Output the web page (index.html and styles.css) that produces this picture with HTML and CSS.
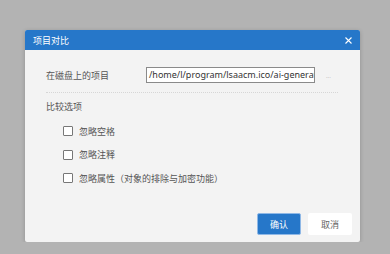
FILE: index.html
```html
<!DOCTYPE html>
<html lang="zh">
<head>
  <meta charset="UTF-8" />
  <title>项目对比</title>
  <link rel="stylesheet" href="styles.css">
</head>
<body>
  <div class="dialog">
    <div class="titlebar">
      <span class="title">项目对比</span>
      <svg class="close" width="9" height="9" viewBox="0 0 9 9">
        <path d="M1.5 1.5L7.5 7.5M7.5 1.5L1.5 7.5" stroke="#fff" stroke-width="1.1" />
      </svg>
    </div>
    <div class="content">
      <div class="path-row">
        <label class="path-label">在磁盘上的项目</label>
        <div class="path-input">/home/l/program/lsaacm.ico/ai-generate</div>
        <span class="browse">...</span>
      </div>
      <div class="sep"></div>
      <div class="section">比较选项</div>
      <div class="opt"><span class="box"></span>忽略空格</div>
      <div class="opt"><span class="box"></span>忽略注释</div>
      <div class="opt"><span class="box"></span>忽略属性（对象的排除与加密功能）</div>
    </div>
    <div class="buttons">
      <button class="btn primary">确认</button>
      <button class="btn">取消</button>
    </div>
  </div>
</body>
</html>
```

FILE: styles.css
```css
body {
  margin: 0;
  padding: 30px 0 0 25px;
  background-color: #b3b3b3;
  font-family: "Noto Sans CJK SC", "Noto Sans", sans-serif;
  font-size: 9px;
  color: #555;
}
.dialog {
  width: 335px;
  height: 212px;
  background-color: #f3f3f3;
  border-radius: 2px;
  box-shadow: 0 1px 4px rgba(0, 0, 0, 0.2);
  display: flex;
  flex-direction: column;
  overflow: hidden;
}
.titlebar {
  height: 20px;
  background-color: #2677c9;
  display: flex;
  align-items: center;
  justify-content: space-between;
  padding: 0 7px 0 8px;
  color: #fff;
}
.title {
  font-size: 9px;
}
.content {
  flex: 1;
  padding: 17px 22px 0 21px;
}
.path-row {
  display: flex;
  align-items: center;
  height: 16px;
}
.path-label {
  width: 100px;
}
.path-input {
  width: 163px;
  height: 14px;
  line-height: 14px;
  padding: 0 2px;
  border: 1px solid #8a8a8a;
  background-color: #fff;
  color: #333;
  font-family: "Noto Sans", sans-serif;
  font-size: 9px;
  white-space: nowrap;
  overflow: hidden;
}
.browse {
  margin-left: 11px;
  margin-top: 2px;
  color: #999;
  font-family: "DejaVu Sans", sans-serif;
  font-size: 5px;
}
.sep {
  margin-top: 9px;
  border-top: 1px dotted #d6d6d6;
}
.section {
  margin-top: 7px;
  height: 14px;
  line-height: 14px;
}
.opt {
  display: flex;
  align-items: center;
  height: 14px;
  margin: 10px 0 0 17px;
}
.opt + .opt {
  margin-top: 9.5px;
}
.box {
  width: 8px;
  height: 8px;
  border: 1px solid #777;
  border-radius: 1px;
  background-color: #fff;
  margin-right: 6px;
}
.buttons {
  display: flex;
  justify-content: flex-end;
  gap: 7px;
  padding: 0 8px 7px 0;
}
.btn {
  width: 44px;
  height: 22px;
  padding: 0;
  border: none;
  border-radius: 2px;
  background-color: #fff;
  color: #666;
  font-family: "Noto Sans CJK SC", sans-serif;
  font-size: 9px;
}
.primary {
  background-color: #2677c9;
  border: 1px solid #8fb8e6;
  color: #fff;
}
```
